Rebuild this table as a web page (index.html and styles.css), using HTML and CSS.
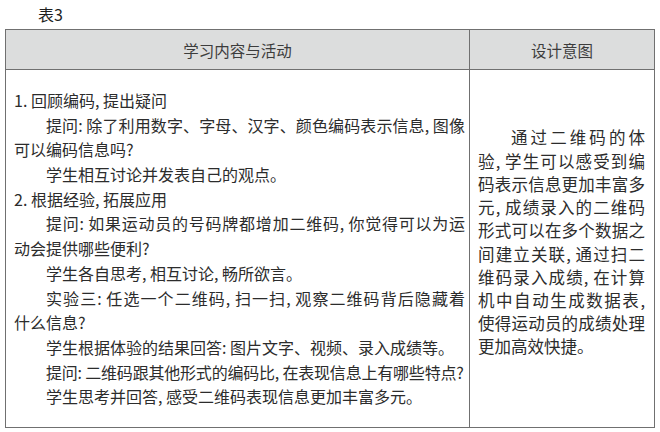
FILE: index.html
```html
<!DOCTYPE html>
<html lang="zh-CN">
<head>
<meta charset="utf-8">
<link rel="stylesheet" href="styles.css">
</head>
<body>
<div class="caption">表3</div>
<div class="sheet">
  <div class="head head-left">学习内容与活动</div>
  <div class="head head-right">设计意图</div>
  <div class="cell cell-left">
    <p>1. 回顾编码, 提出疑问</p>
    <p><span class="full">提问: 除了利用数字、字母、汉字、颜色编码表示信息, 图像</span>可以编码信息吗?</p>
    <p class="ind">学生相互讨论并发表自己的观点。</p>
    <p>2. 根据经验, 拓展应用</p>
    <p><span class="full">提问: 如果运动员的号码牌都增加二维码, 你觉得可以为运</span>动会提供哪些便利?</p>
    <p class="ind">学生各自思考, 相互讨论, 畅所欲言。</p>
    <p><span class="full">实验三: 任选一个二维码, 扫一扫, 观察二维码背后隐藏着</span>什么信息?</p>
    <p class="ind">学生根据体验的结果回答: 图片文字、视频、录入成绩等。</p>
    <p class="ind tight">提问: 二维码跟其他形式的编码比, 在表现信息上有哪些特点?</p>
    <p class="ind">学生思考并回答, 感受二维码表现信息更加丰富多元。</p>
  </div>
  <div class="cell cell-right">
    <p class="ind">通过二维码的体验, 学生可以感受到编码表示信息更加丰富多元, 成绩录入的二维码形式可以在多个数据之间建立关联, 通过扫二维码录入成绩, 在计算机中自动生成数据表, 使得运动员的成绩处理更加高效快捷。</p>
  </div>
</div>
</body>
</html>
```
FILE: styles.css
```css
html, body {
  margin: 0;
  padding: 0;
  background: #ffffff;
}
body {
  font-family: "Noto Sans CJK SC", "Noto Sans", sans-serif;
  color: #2c2c2c;
}
p {
  margin: 0;
}
.caption {
  padding: 4px 0 0 38px;
  height: 25px;
  font-size: 16px;
  line-height: 21px;
  color: #1e1e1e;
}
.sheet {
  margin-left: 5px;
  width: 648px;
  display: grid;
  grid-template-columns: 464px 184px;
  grid-template-rows: 40px 357px;
  border: 1px solid #707070;
}
.head {
  background: #dcdddd;
  border-bottom: 1px solid #707070;
  display: flex;
  align-items: center;
  justify-content: center;
  font-size: 15.5px;
  color: #3c3c3c;
}
.head-left,
.cell-left {
  border-right: 1px solid #707070;
}
.cell {
  display: flex;
  flex-direction: column;
  justify-content: center;
}
.cell-left {
  padding: 0 4px 0 8px;
  font-size: 16px;
  line-height: 24.7px;
}
.cell-right {
  padding: 0 9px 12px 8px;
  font-size: 16.5px;
  line-height: 23.2px;
  text-align: justify;
}
.ind,
.full {
  text-indent: 2em;
}
.full {
  display: block;
  text-align: justify;
  text-align-last: justify;
}
.tight {
  white-space: nowrap;
  letter-spacing: -0.2px;
}
```
